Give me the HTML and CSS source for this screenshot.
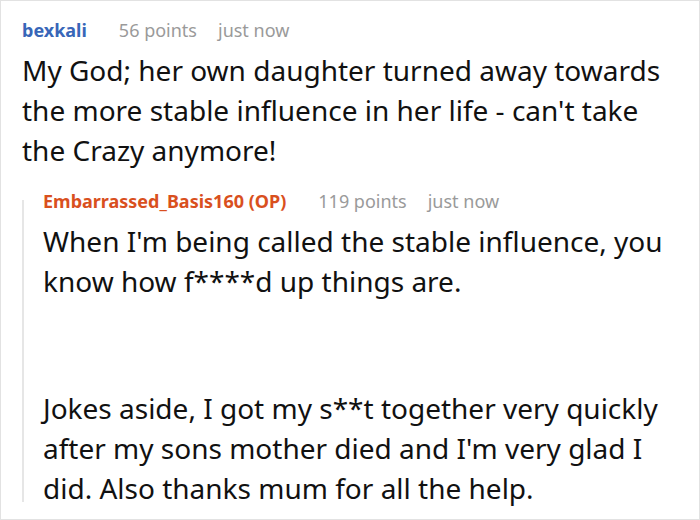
FILE: index.html
```html
<!DOCTYPE html>
<html>
<head>
<meta charset="utf-8">
<link rel="stylesheet" href="styles.css">
</head>
<body>
<div class="frame">
  <div class="comment">
    <div class="meta">
      <span class="author">bexkali</span>
      <span class="points">56 points</span>
      <span class="time">just now</span>
    </div>
    <div class="body">
      <p>My God; her own daughter turned away towards the more stable influence in her life - can't take the Crazy anymore!</p>
    </div>
  </div>
  <div class="reply">
    <div class="thread-line"></div>
    <div class="comment">
      <div class="meta">
        <span class="author op">Embarrassed_Basis160 (OP)</span>
        <span class="points">119 points</span>
        <span class="time">just now</span>
      </div>
      <div class="body">
        <p>When I'm being called the stable influence, you know how f****d up things are.</p>
        <p>&nbsp;</p>
        <p>Jokes aside, I got my s**t together very quickly after my sons mother died and I'm very glad I did. Also thanks mum for all the help.</p>
      </div>
    </div>
  </div>
</div>
</body>
</html>
```

FILE: styles.css
```css
html, body {
  margin: 0;
  padding: 0;
  background: #fff;
}

.frame {
  box-sizing: border-box;
  width: 700px;
  height: 520px;
  border: 1px solid #e2e2e2;
  padding: 16px 20px 0 21px;
  font-family: "Noto Sans", "Open Sans", sans-serif;
  color: #111;
  overflow: hidden;
}

.meta {
  font-size: 18px;
  line-height: 26px;
  color: #9a9a9a;
  display: flex;
  white-space: nowrap;
}

.author {
  font-weight: 700;
  color: #3866b8;
  margin-right: 32px;
}

.author.op {
  color: #d9501e;
}

.points {
  margin-right: 21px;
}

.body {
  margin-top: 7px;
  font-size: 28px;
  line-height: 40px;
}

.body p {
  margin: 0;
}

.body p + p {
  margin-top: 23.5px;
}

.reply {
  margin-top: 18px;
  display: grid;
  grid-template-columns: 2px 1fr;
  column-gap: 19px;
}

.thread-line {
  background: #e6e6e6;
  margin: 12px 0 6px;
}
```
